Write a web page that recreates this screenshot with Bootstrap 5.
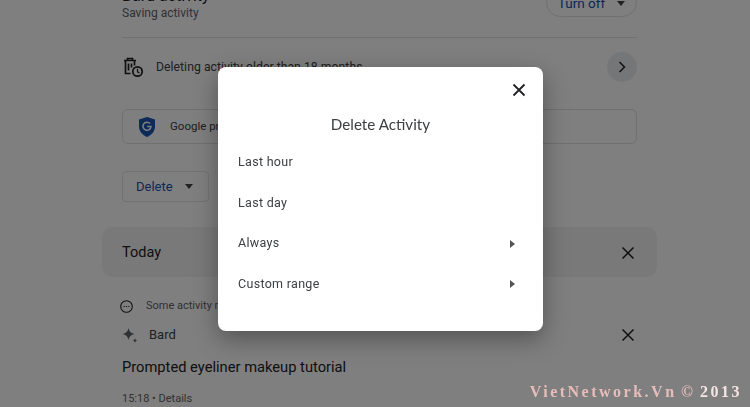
<!DOCTYPE html>
<html lang="en">
<head>
  <meta charset="UTF-8" />
  <meta name="viewport" content="width=device-width, initial-scale=1" />
  <title>Bard activity</title>

  <link href="https://cdn.jsdelivr.net/npm/bootstrap@5.3.0/dist/css/bootstrap.min.css" rel="stylesheet">

  <style>
    html, body { height: 407px; overflow: hidden; }
    body { font-family: Roboto, "Liberation Sans", sans-serif; color: #202124; background: #fff; }

    /* Page behind the dialog */
    .pagina { padding: 0 93px 0 102px; margin-top: -16px; }
    .bloco { padding: 0 20px; }
    .topo { height: 54px; border-bottom: 1px solid #e4e4e4; }
    .topo-titulo { font-size: 16px; line-height: 20px; padding-top: 2px; height: 21px; }
    .topo-sub { font-size: 12px; line-height: 16px; color: #5f6368; }
    .btn-turn { width: 91px; height: 29px; margin-top: 4px; border: 1px solid #e0e0e0; border-radius: 15px; color: #1a4fa8; font-size: 13.5px; background: #fff; padding-top: 1px !important; }
    .seta { width: 0; height: 0; border-left: 4.5px solid transparent; border-right: 4.5px solid transparent; border-top: 5px solid #444; }
    .linha-apagar { height: 30px; margin-top: 14px; }
    .linha-apagar svg.lixeira { margin-left: 1px; margin-right: -1px; }
    .linha-apagar span { font-size: 12.2px; letter-spacing: .05px; color: #3c4043; margin-left: 14px; }
    .circulo { width: 30px; height: 30px; border-radius: 50%; background: #ebedf0; }
    .caixa-google { height: 35px; margin-top: 27px; border: 1px solid #e0e0e0; border-radius: 6px; padding-left: 16px; font-size: 11.5px; color: #3c4043; }
    .caixa-google svg { margin-right: 15px; }
    .btn-delete { width: 87px; height: 31px; margin-top: 27px; border: 1px solid #e4e4e4; border-radius: 4px; padding: 0 15px 0 13px; color: #1a4fa8; font-size: 13px; background: #fff; }
    .faixa-hoje { height: 50px; margin-top: 25px; padding: 2px 22px 0 20px; background: #f2f2f2; border-radius: 10px; font-size: 14.5px; }
    .aviso { height: 16px; margin-top: 21px; font-size: 11px; color: #5f6368; }
    .aviso svg { margin-left: -2px; margin-right: 13px; }
    .origem { height: 20px; margin-top: 11px; font-size: 13px; color: #3c4043; padding-right: 2px; }
    .origem .estrela { margin-right: 11px; }
    .prompt { margin-top: 12px; font-size: 14.7px; line-height: 20px; }
    .detalhe { margin-top: 15px; font-size: 11px; line-height: 14px; color: #5f6368; }

    /* Backdrop and dialog */
    .fundo { position: fixed; inset: 0; background: rgba(0, 0, 0, .5); }
    .dialogo { position: absolute; left: 218px; top: 67px; width: 325px; height: 264px; background: #fff; border-radius: 8px; box-shadow: 0 8px 24px rgba(0, 0, 0, .35); }
    .fechar { position: absolute; right: 17px; top: 16px; line-height: 0; }
    .dialogo-titulo { padding-top: 47px; text-align: center; font-family: Lato, Roboto, sans-serif; font-size: 15.2px; line-height: 20px; color: #3c4043; }
    .opcoes { margin-top: 8px; }
    .opcao { height: 40.7px; padding: 0 28px 0 20px; font-size: 12.5px; letter-spacing: .3px; color: #3c4043; border: 0; background: transparent; }
    .seta-dir { width: 0; height: 0; border-top: 4.5px solid transparent; border-bottom: 4.5px solid transparent; border-left: 5px solid #555; }

    /* Watermark */
    .marca { position: absolute; right: 8px; bottom: 7px; font-family: "Liberation Serif", serif; font-weight: 700; font-size: 16px; line-height: 16px; letter-spacing: 2.5px; word-spacing: -2px; color: #e6bdbb; white-space: nowrap; }
    .marca b { color: #f3e6e4; }
  </style>
</head>
<body>

  <div class="pagina">
    <div class="bloco">
      <div class="topo d-flex justify-content-between">
        <div>
          <div class="topo-titulo">Bard activity</div>
          <div class="topo-sub">Saving activity</div>
        </div>
        <button class="btn-turn d-flex align-items-center justify-content-center gap-2 p-0" type="button">Turn off <span class="seta ms-1"></span></button>
      </div>

      <div class="linha-apagar d-flex align-items-center">
        <!-- lixeira com relogio -->
        <svg class="lixeira" width="20" height="21" viewBox="0 0 20 21" fill="none" stroke="#202124" stroke-width="1.700">
          <path d="M1 3.500h12M4.500 3.500V1.500h5v2M2.500 3.500v13h5M11.500 3.500v5M5.500 6.500v7M8.500 6.500v4"/>
          <circle cx="14.500" cy="14.500" r="4.700"/>
          <path d="M14.500 11.800v3l2 1.200" stroke-width="1.200"/>
        </svg>
        <span class="flex-grow-1">Deleting activity older than 18 months</span>
        <div class="circulo d-flex align-items-center justify-content-center">
          <svg width="12" height="14" viewBox="0 0 12 14" fill="none" stroke="#202124" stroke-width="1.500"><path d="M3.500 2 8.500 7l-5 5"/></svg>
        </div>
      </div>

      <div class="caixa-google d-flex align-items-center">
        <svg width="16" height="20" viewBox="0 0 16 20">
          <path d="M8 0l8 2.500v7C16 14.500 12.500 18 8 20 3.500 18 0 14.500 0 9.500v-7z" fill="#1a56b0"/>
          <path d="M11 6.500A4 4 0 1 0 12 9.500H8.200" fill="none" stroke="#fff" stroke-width="1.500"/>
        </svg>
        Google protects your privacy and security.
      </div>

      <button class="btn-delete d-flex align-items-center justify-content-between" type="button">Delete <span class="seta"></span></button>
    </div>

    <div class="faixa-hoje d-flex align-items-center justify-content-between">
      Today
      <svg width="14" height="14" viewBox="0 0 14 14" stroke="#202124" stroke-width="1.500"><path d="M1.500 1.500l11 11M12.500 1.500l-11 11"/></svg>
    </div>

    <div class="bloco">
      <div class="aviso d-flex align-items-center">
        <svg width="13" height="13" viewBox="0 0 13 13" fill="none" stroke="#202124" stroke-width="1.100">
          <circle cx="6.500" cy="6.500" r="5.800"/>
          <path d="M3.500 6.500h1.200M5.900 6.500h1.200M8.300 6.500h1.200" stroke-width="1.200"/>
        </svg>
        Some activity may not appear yet
      </div>
      <div class="origem d-flex align-items-center justify-content-between">
        <div class="d-flex align-items-center">
          <svg class="estrela" width="16" height="17" viewBox="0 0 16 17" fill="#5f6368">
            <path d="M6.500 1c.6 3.500 2.400 5.400 6 6-3.600.6-5.400 2.500-6 6-.6-3.500-2.400-5.400-6-6 3.600-.6 5.400-2.500 6-6z"/>
            <path d="M13 11c.2 1.600 1 2.400 2.500 2.500-1.500.2-2.300 1-2.500 2.500-.2-1.500-1-2.300-2.500-2.500 1.500-.1 2.300-.9 2.500-2.500z"/>
          </svg>
          Bard
        </div>
        <svg width="14" height="14" viewBox="0 0 14 14" stroke="#202124" stroke-width="1.500"><path d="M1.500 1.500l11 11M12.500 1.500l-11 11"/></svg>
      </div>
      <div class="prompt">Prompted eyeliner makeup tutorial</div>
      <div class="detalhe">15:18 • Details</div>
    </div>
  </div>

  <div class="fundo"></div>

  <div class="dialogo">
    <div class="fechar">
      <svg width="14" height="14" viewBox="0 0 14 14" stroke="#202124" stroke-width="1.800"><path d="M1.500 1.500l11 11M12.500 1.500l-11 11"/></svg>
    </div>
    <div class="dialogo-titulo">Delete Activity</div>
    <div class="list-group list-group-flush opcoes">
      <div class="opcao d-flex align-items-center justify-content-between">Last hour</div>
      <div class="opcao d-flex align-items-center justify-content-between">Last day</div>
      <div class="opcao d-flex align-items-center justify-content-between">Always <span class="seta-dir"></span></div>
      <div class="opcao d-flex align-items-center justify-content-between">Custom range <span class="seta-dir"></span></div>
    </div>
  </div>

  <div class="marca">VietNetwork.Vn © <b>2013</b></div>

  <script src="https://cdn.jsdelivr.net/npm/bootstrap@5.3.0/dist/js/bootstrap.bundle.min.js"></script>
</body>
</html>
